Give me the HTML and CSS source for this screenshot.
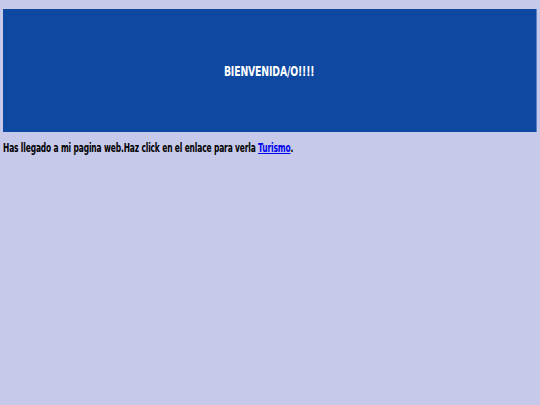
FILE: index.html
```html
<!DOCTYPE html>
<html lang="es">
<head>
<meta charset="utf-8">
<title>Bienvenida</title>
<link rel="stylesheet" href="styles.css">
</head>
<body>
<header class="banner">
  <h1 class="banner-title">BIENVENIDA/O!!!!</h1>
</header>
<p class="intro"><span class="intro-text">Has llegado a mi pagina web.Haz click en el enlace para verla <a href="#" class="link">Turismo</a>.</span></p>
</body>
</html>
```
FILE: styles.css
```css
html, body {
  background: #c6c9e9;
}
body {
  margin: 9px 3px 0 3px;
  font-family: "DejaVu Sans Condensed", "DejaVu Sans", sans-serif;
  font-weight: bold;
  color: #000;
}
.banner {
  background: #0e48a0;
  height: 123px;
  display: flex;
  align-items: center;
  justify-content: center;
  border-right: 1px solid #5a7fc4;
}
.banner-title {
  margin: 0;
  color: #fff;
  font-size: 14px;
  font-weight: bold;
  letter-spacing: -0.2px;
  transform: scaleX(0.74);
}
.intro {
  margin: 9px 0 0 0;
  font-size: 12px;
  white-space: nowrap;
}
.intro-text {
  display: inline-block;
  letter-spacing: -0.2px;
  transform: scaleX(0.695);
  transform-origin: left center;
}
.link {
  color: #0000ee;
}
```
